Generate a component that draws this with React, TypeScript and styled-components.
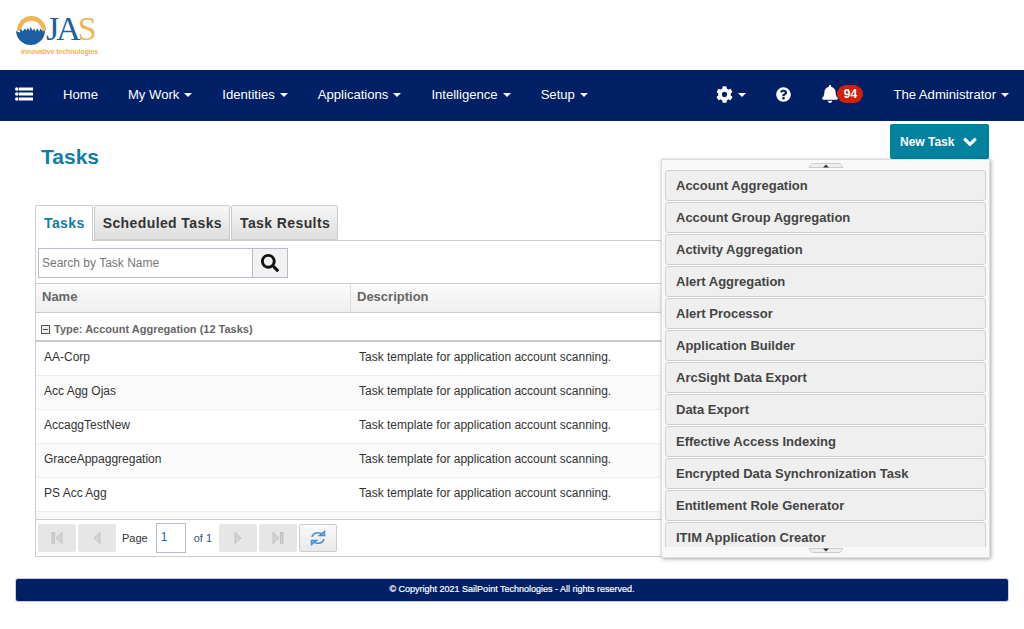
import React from 'react'
import styled, {createGlobalStyle} from 'styled-components'
import {FaBell, FaChevronDown, FaCog, FaQuestionCircle, FaSearch} from 'react-icons/fa'

const GlobalStyle = createGlobalStyle`
    html, body {
        margin: 0;
        padding: 0;
        background: #fff;
        font-family: "Liberation Sans", Arial, sans-serif;
        color: #333;
    }
`

const Page = styled.div`
    width: 1024px;
    height: 629px;
    overflow: hidden;
`

const LogoBar = styled.header`
    height: 70px;
    padding: 16px 0 0 16px;
    box-sizing: border-box;
`

const LogoMark = styled.div`
    display: flex;
    align-items: flex-start;
    height: 32px;
`

const LogoLetters = styled.span`
    font-family: "Liberation Serif", serif;
    font-size: 34px;
    line-height: 30px;
    letter-spacing: -3px;
    color: #1d5fa3;
    margin: -2px 0 0 -1px;
`

const LogoAccent = styled.span`
    color: #f0b355;
`

const LogoTag = styled.div`
    font-size: 7px;
    font-weight: bold;
    line-height: 8px;
    letter-spacing: -0.12px;
    color: #f0b355;
    margin: 0 0 0 5px;
`

const NavBar = styled.nav`
    height: 51px;
    background: #002066;
    display: flex;
    align-items: center;
    justify-content: space-between;
    padding: 0 15px 3px;
    box-sizing: border-box;
    color: #fff;
    font-size: 13.1px;
`

const NavGroup = styled.div`
    display: flex;
    align-items: center;
    gap: 30px;
`

const NavItem = styled.a`
    display: flex;
    align-items: center;
    gap: 5px;
    color: #fff;
`

const Caret = styled.span`
    display: inline-block;
    width: 0;
    height: 0;
    margin-top: 2px;
    border-left: 4px solid transparent;
    border-right: 4px solid transparent;
    border-top: 4px solid #fff;
`

const BellWrap = styled.span`
    display: flex;
    align-items: center;
`

const Badge = styled.span`
    background: #d0210f;
    color: #fff;
    font-size: 12px;
    font-weight: bold;
    line-height: 18px;
    width: 26px;
    text-align: center;
    border-radius: 9px;
    margin-left: -2px;
`

const Main = styled.main`
    padding: 0 35px;
    height: 435px;
    box-sizing: border-box;
`

const TitleRow = styled.div`
    display: flex;
    justify-content: space-between;
    align-items: flex-start;
    height: 84px;
    padding-top: 3px;
    box-sizing: border-box;
`

const Title = styled.h1`
    margin: 21px 0 0 6px;
    font-size: 21px;
    line-height: 24px;
    font-weight: bold;
    color: #0f7ea5;
`

const NewTaskWrap = styled.div`
    position: relative;
    z-index: 5;
`

const NewTaskButton = styled.button`
    display: flex;
    align-items: center;
    gap: 9px;
    width: 99px;
    height: 35px;
    padding: 0 0 0 10px;
    box-sizing: border-box;
    border: 0;
    border-radius: 2px;
    background: #00829f;
    color: #fff;
    font: bold 12px "Liberation Sans", Arial, sans-serif;
`

const Menu = styled.div`
    position: absolute;
    top: 35px;
    right: -1px;
    width: 329px;
    height: 399px;
    box-sizing: border-box;
    background: #f8f8f8;
    border: 1px solid #ddd;
    box-shadow: 1px 1px 4px rgba(0, 0, 0, 0.35);
    display: flex;
    flex-direction: column;
`

const Scroller = styled.div<{$down?: boolean}>`
    height: 10px;
    flex: none;
    display: flex;
    justify-content: center;
    align-items: flex-start;
    padding-top: ${p => (p.$down ? '1px' : '3px')};
    box-sizing: border-box;
    background: #f8f8f8;
`

const ScrollerTab = styled.svg`
    display: block;
`

const MenuList = styled.div`
    flex: 1;
    overflow: hidden;
    padding: 0 3px;
    display: flex;
    flex-direction: column;
    gap: 1px;
`

const MenuItem = styled.div`
    flex: none;
    height: 31px;
    line-height: 29px;
    box-sizing: border-box;
    padding-left: 10px;
    border: 1px solid #d0d0d0;
    border-radius: 3px;
    background: #efefef;
    font-size: 13px;
    font-weight: bold;
    color: #444;
`

const Panel = styled.section`
    width: 954px;
`

const TabStrip = styled.div`
    display: flex;
    gap: 1px;
    height: 36px;
    border-bottom: 1px solid #ccc;
    box-sizing: border-box;
`

const Tab = styled.div<{$active?: boolean}>`
    height: ${p => (p.$active ? '36px' : '35px')};
    padding: 0 7px 0 8px;
    line-height: 34px;
    box-sizing: border-box;
    border: 1px solid #ccc;
    border-bottom: ${p => (p.$active ? '0' : '1px solid #ccc')};
    border-radius: 2px 2px 0 0;
    font-size: 14px;
    font-weight: bold;
    letter-spacing: 0.4px;
    color: ${p => (p.$active ? '#0f7ea5' : '#333')};
    background: ${p => (p.$active ? '#fff' : 'linear-gradient(#f6f6f6, #dedede)')};
`

const PanelBody = styled.div`
    border: 1px solid #ccc;
    border-top: 0;
`

const SearchRow = styled.div`
    display: flex;
    height: 42px;
    padding: 7px 2px 0;
    box-sizing: border-box;
`

const SearchInput = styled.div`
    width: 215px;
    height: 30px;
    line-height: 28px;
    box-sizing: border-box;
    padding-left: 3px;
    border: 1px solid #b8bccb;
    font-size: 12px;
    color: #777;
`

const SearchButton = styled.div`
    width: 35px;
    height: 30px;
    box-sizing: border-box;
    border: 1px solid #b8bccb;
    border-left: 0;
    background: #f2f2f2;
    display: flex;
    align-items: center;
    justify-content: center;
    color: #111;
    font-size: 18px;
`

const HeaderRow = styled.div`
    display: flex;
    height: 30px;
    align-items: center;
    border-top: 1px solid #ccc;
    border-bottom: 1px solid #ccc;
    box-sizing: border-box;
    background: linear-gradient(#fbfbfb, #efefef);
    font-size: 13px;
    font-weight: bold;
    color: #666;
`

const NameHead = styled.div`
    width: 308px;
    height: 100%;
    line-height: 26px;
    padding-left: 6px;
    border-right: 1px solid #ddd;
`

const DescHead = styled.div`
    padding: 0 0 4px 6px;
`

const GroupRow = styled.div`
    display: flex;
    align-items: center;
    gap: 4px;
    height: 29px;
    padding: 5px 0 0 5px;
    box-sizing: border-box;
    border-bottom: 2px solid #cfc8c8;
    font-size: 11px;
    font-weight: bold;
    color: #666;
`

const CollapseBox = styled.span`
    width: 7px;
    height: 7px;
    border: 1px solid #555;
    background: linear-gradient(#555, #555) center / 5px 1px no-repeat;
    background-color: #eee;
`

const Row = styled.div<{$alt?: boolean}>`
    display: flex;
    align-items: center;
    height: 34px;
    box-sizing: border-box;
    padding-bottom: 4px;
    border-bottom: 1px solid #eee;
    background: ${p => (p.$alt ? '#fafafa' : '#fff')};
    font-size: 12px;
    color: #333;
`

const NameCell = styled.div`
    width: 315px;
    padding-left: 8px;
`

const DescCell = styled.div`
    padding-left: 0;
`

const ScrollStrip = styled.div`
    height: 7px;
    background: #f8f8f8;
`

const Pager = styled.div`
    display: flex;
    align-items: center;
    height: 37px;
    padding-left: 2px;
    border-top: 1px solid #ccc;
    box-sizing: border-box;
    font-size: 11px;
    color: #333;
`

const PagerButton = styled.div<{$gapAfter?: number}>`
    width: 38px;
    height: 28px;
    margin-right: ${p => p.$gapAfter ?? 2}px;
    border-radius: 2px;
    background: #e6e6e6;
    display: flex;
    align-items: center;
    justify-content: center;
`

const RefreshButton = styled(PagerButton)`
    box-sizing: border-box;
    border: 1px solid #ccc;
    background: linear-gradient(#f9f9f9, #e9e9e9);
`

const PageInput = styled.div`
    width: 30px;
    height: 30px;
    line-height: 26px;
    box-sizing: border-box;
    margin: 0 8px;
    padding-left: 4px;
    border: 1px solid #b8bccb;
    font-size: 12px;
    color: #1d62a8;
`

const PageOf = styled.span`
    width: 25px;
    color: #34507a;
`

const Footer = styled.footer`
    margin: 22px 15px 0;
    height: 24px;
    width: 994px;
    box-sizing: border-box;
    border: 1px solid #ccd;
    border-radius: 3px;
    background: #002066;
    color: #fff;
    font-size: 9px;
    line-height: 21px;
    text-align: center;
    -webkit-text-stroke: 0.2px #fff;
`

const Logo = () => (
    <div>
        <LogoMark>
            <svg width="31" height="31" viewBox="0 0 32 32">
                <path d="M1 15a15 15 0 0 1 30 0l-4 1a11 11 0 0 0-22 0z" fill="#f0b355"/>
                <path d="M1 16l3 1 1-4 2 3 2-3 2 2 1-3 2 3 1-4 2 4 2-2 1 3 2-3 2 3 1-3 3 3 2-1a15 15 0 0 1-30 0z" fill="#1d5fa3"/>
            </svg>
            <LogoLetters>JA<LogoAccent>S</LogoAccent></LogoLetters>
        </LogoMark>
        <LogoTag>innovative technologies</LogoTag>
    </div>
)

const MenuListIcon = () => (
    <svg width="18" height="14" viewBox="0 0 18 14" fill="#fff">
        <circle cx="1.800" cy="2" r="1.800"/>
        <circle cx="1.800" cy="7" r="1.800"/>
        <circle cx="1.800" cy="12" r="1.800"/>
        <rect x="4" y="0.500" width="14" height="3"/>
        <rect x="4" y="5.500" width="14" height="3"/>
        <rect x="4" y="10.500" width="14" height="3"/>
    </svg>
)

const PagerIcon: React.FC<{d: string, bar?: number}> = ({d, bar}) => (
    <svg width="14" height="14" viewBox="0 0 14 14">
        {bar !== undefined && <rect x={bar} y="1.500" width="2.500" height="11" fill="#d0d0d0" stroke="#b0b0b0" strokeWidth="0.6"/>}
        <path d={d} fill="#d4d4d4" stroke="#b0b0b0" strokeWidth="0.6"/>
    </svg>
)

const RefreshIcon = () => (
    <svg width="16" height="16" viewBox="0 0 16 16" fill="none" stroke="#3f8fdd" strokeWidth="1.5">
        <path d="M2 7a6 5 0 0 1 10-3"/>
        <path d="M9.500 5.500h5v-4z" fill="#9ccbf3"/>
        <path d="M14 9a6 5 0 0 1-10 3"/>
        <path d="M6.500 10.500h-5v4z" fill="#9ccbf3"/>
    </svg>
)

const menuTasks = [
    'Account Aggregation',
    'Account Group Aggregation',
    'Activity Aggregation',
    'Alert Aggregation',
    'Alert Processor',
    'Application Builder',
    'ArcSight Data Export',
    'Data Export',
    'Effective Access Indexing',
    'Encrypted Data Synchronization Task',
    'Entitlement Role Generator',
    'ITIM Application Creator',
]

const taskRows = ['AA-Corp', 'Acc Agg Ojas', 'AccaggTestNew', 'GraceAppaggregation', 'PS Acc Agg']

const navLinks = ['My Work', 'Identities', 'Applications', 'Intelligence', 'Setup']

const App: React.FC = () => {
    return (
        <Page>
            <GlobalStyle/>
            <LogoBar>
                <Logo/>
            </LogoBar>
            <NavBar>
                <NavGroup>
                    <MenuListIcon/>
                    <NavItem>Home</NavItem>
                    {navLinks.map(link => (
                        <NavItem key={link}>{link}<Caret/></NavItem>
                    ))}
                </NavGroup>
                <NavGroup>
                    <NavItem><FaCog size={17}/><Caret/></NavItem>
                    <NavItem><FaQuestionCircle size={15}/></NavItem>
                    <BellWrap><FaBell size={18}/><Badge>94</Badge></BellWrap>
                    <NavItem>The Administrator<Caret/></NavItem>
                </NavGroup>
            </NavBar>
            <Main>
                <TitleRow>
                    <Title>Tasks</Title>
                    <NewTaskWrap>
                        <NewTaskButton>New Task <FaChevronDown size={14} stroke="currentColor" strokeWidth={40}/></NewTaskButton>
                        <Menu>
                            <Scroller>
                                <ScrollerTab width="36" height="5" viewBox="0 0 36 5">
                                    <path d="M4 .5h28l3 4H1z" fill="#eee" stroke="#ccc"/>
                                    <path d="M15 4.500l3-3 3 3z" fill="#333"/>
                                </ScrollerTab>
                            </Scroller>
                            <MenuList>
                                {menuTasks.map(task => <MenuItem key={task}>{task}</MenuItem>)}
                            </MenuList>
                            <Scroller $down>
                                <ScrollerTab width="36" height="5" viewBox="0 0 36 5">
                                    <path d="M1 .5h34l-3 4H4z" fill="#eee" stroke="#ccc"/>
                                    <path d="M15 .5l3 3 3-3z" fill="#333"/>
                                </ScrollerTab>
                            </Scroller>
                        </Menu>
                    </NewTaskWrap>
                </TitleRow>
                <Panel>
                    <TabStrip>
                        <Tab $active>Tasks</Tab>
                        <Tab>Scheduled Tasks</Tab>
                        <Tab>Task Results</Tab>
                    </TabStrip>
                    <PanelBody>
                        <SearchRow>
                            <SearchInput>Search by Task Name</SearchInput>
                            <SearchButton><FaSearch/></SearchButton>
                        </SearchRow>
                        <HeaderRow>
                            <NameHead>Name</NameHead>
                            <DescHead>Description</DescHead>
                        </HeaderRow>
                        <GroupRow>
                            <CollapseBox/>
                            Type: Account Aggregation (12 Tasks)
                        </GroupRow>
                        {taskRows.map((name, i) => (
                            <Row key={name} $alt={i % 2 === 1}>
                                <NameCell>{name}</NameCell>
                                <DescCell>Task template for application account scanning.</DescCell>
                            </Row>
                        ))}
                        <ScrollStrip/>
                        <Pager>
                            <PagerButton><PagerIcon bar={2} d="M12 1.500v11L6 7z"/></PagerButton>
                            <PagerButton $gapAfter={6}><PagerIcon d="M10 1.500v11L4 7z"/></PagerButton>
                            Page
                            <PageInput>1</PageInput>
                            <PageOf>of 1</PageOf>
                            <PagerButton><PagerIcon d="M4 1.500v11l6-5.500z"/></PagerButton>
                            <PagerButton><PagerIcon bar={9.500} d="M2 1.500v11l6-5.500z"/></PagerButton>
                            <RefreshButton><RefreshIcon/></RefreshButton>
                        </Pager>
                    </PanelBody>
                </Panel>
            </Main>
            <Footer>© Copyright 2021 SailPoint Technologies - All rights reserved.</Footer>
        </Page>
    )
}

export default App
